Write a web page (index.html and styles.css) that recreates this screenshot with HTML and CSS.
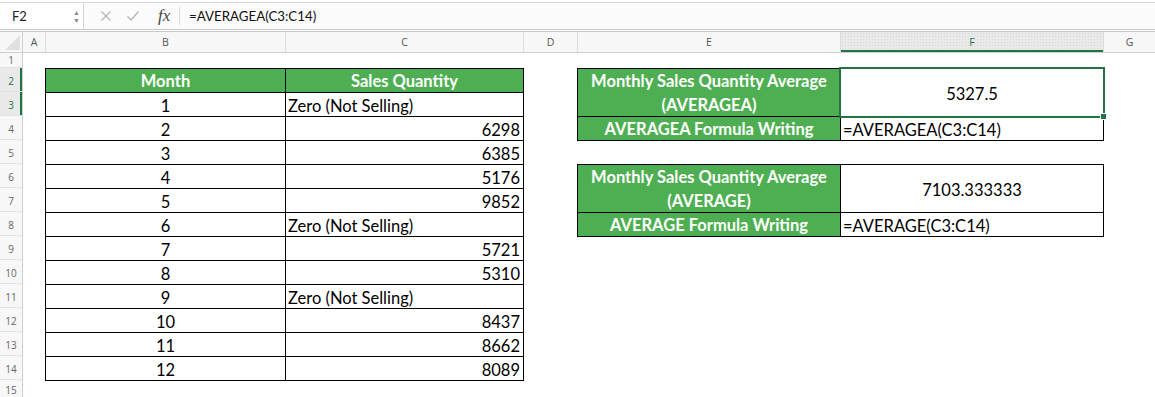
FILE: index.html
```html
<!DOCTYPE html>
<html lang="en">
<head>
    <meta charset="UTF-8">
    <title>AVERAGEA Example</title>
    <link rel="stylesheet" href="styles.css">
</head>
<body>
    <div class="toolbar">
        <div class="name-box">
            <span class="name">F2</span>
            <span class="stepper"><span>&#9650;</span><span>&#9660;</span></span>
        </div>
        <div class="bar-icons">
            <svg class="icon icon-x" width="12" height="12" viewBox="0 0 12 12">
                <path d="M1.5 1.5 L10.5 10.5 M10.5 1.5 L1.5 10.5" stroke="#b4b4b4" stroke-width="1.3" fill="none"/>
            </svg>
            <svg class="icon icon-check" width="14" height="12" viewBox="0 0 14 12">
                <path d="M1.5 6.5 L5 10 L12.5 1.5" stroke="#b4b4b4" stroke-width="1.3" fill="none"/>
            </svg>
            <span class="fx">fx</span>
        </div>
        <div class="formula">=AVERAGEA(C3:C14)</div>
    </div>

    <div class="col-headers">
        <div class="corner"><span class="corner-tri"></span></div>
        <div class="ch col-a">A</div>
        <div class="ch col-b">B</div>
        <div class="ch col-c">C</div>
        <div class="ch col-d">D</div>
        <div class="ch col-e">E</div>
        <div class="ch col-f active">F</div>
        <div class="ch col-g">G</div>
    </div>

    <div class="sheet">
        <div class="row-headers">
            <div class="rh short">1</div>
            <div class="rh active">2</div>
            <div class="rh active">3</div>
            <div class="rh">4</div>
            <div class="rh">5</div>
            <div class="rh">6</div>
            <div class="rh">7</div>
            <div class="rh">8</div>
            <div class="rh">9</div>
            <div class="rh">10</div>
            <div class="rh">11</div>
            <div class="rh">12</div>
            <div class="rh">13</div>
            <div class="rh">14</div>
            <div class="rh last">15</div>
        </div>

        <div class="cells">
            <div class="grid data">
                <div class="cell head">Month</div>
                <div class="cell head">Sales Quantity</div>
                <div class="cell center">1</div><div class="cell left">Zero (Not Selling)</div>
                <div class="cell center">2</div><div class="cell right">6298</div>
                <div class="cell center">3</div><div class="cell right">6385</div>
                <div class="cell center">4</div><div class="cell right">5176</div>
                <div class="cell center">5</div><div class="cell right">9852</div>
                <div class="cell center">6</div><div class="cell left">Zero (Not Selling)</div>
                <div class="cell center">7</div><div class="cell right">5721</div>
                <div class="cell center">8</div><div class="cell right">5310</div>
                <div class="cell center">9</div><div class="cell left">Zero (Not Selling)</div>
                <div class="cell center">10</div><div class="cell right">8437</div>
                <div class="cell center">11</div><div class="cell right">8662</div>
                <div class="cell center">12</div><div class="cell right">8089</div>
            </div>

            <div class="side">
                <div class="grid summary">
                    <div class="cell head tall">Monthly Sales Quantity Average<br>(AVERAGEA)</div>
                    <div class="cell center tall selected">5327.5<span class="handle"></span></div>
                    <div class="cell head">AVERAGEA Formula Writing</div>
                    <div class="cell left">=AVERAGEA(C3:C14)</div>
                </div>
                <div class="grid summary">
                    <div class="cell head tall">Monthly Sales Quantity Average<br>(AVERAGE)</div>
                    <div class="cell center tall">7103.333333</div>
                    <div class="cell head">AVERAGE Formula Writing</div>
                    <div class="cell left">=AVERAGE(C3:C14)</div>
                </div>
            </div>
        </div>
    </div>
</body>
</html>
```

FILE: styles.css
```css
body {
    margin: 0;
    background-color: #fff;
    font-family: Lato, "Open Sans", sans-serif;
    color: #000;
    overflow: hidden;
}

/* formula bar */
.toolbar {
    margin-top: 2px;
    height: 26px;
    border-top: 1px solid #d9d9d9;
    border-bottom: 3px double #c9c9c9;
    background-color: #fbfbfb;
    display: flex;
    align-items: center;
}

.name-box {
    width: 84px;
    height: 100%;
    box-sizing: border-box;
    border-right: 1px solid #d4d4d4;
    background-color: #fff;
    display: flex;
    align-items: center;
    justify-content: space-between;
    padding: 0 3px 0 12px;
}

.name {
    font-size: 13px;
    color: #222;
}

.stepper {
    display: flex;
    flex-direction: column;
    font-size: 7px;
    line-height: 8px;
    color: #8a8a8a;
}

.bar-icons {
    display: flex;
    align-items: center;
    height: 18px;
    width: 96px;
    padding-left: 16px;
    box-sizing: border-box;
    border-right: 1px solid #dcdcdc;
}

.icon-x {
    margin-right: 14px;
}

.icon-check {
    margin-right: 18px;
}

.fx {
    font-family: "Liberation Serif", serif;
    font-style: italic;
    font-size: 17px;
    color: #444;
}

.formula {
    padding-left: 9px;
    font-size: 13.3px;
    color: #111;
}

/* column headers */
.col-headers {
    display: flex;
    height: 21px;
    box-sizing: border-box;
    border-bottom: 1px solid #cfcfcf;
    background-color: #f7f7f7;
}

.corner, .ch {
    box-sizing: border-box;
    border-right: 1px solid #dcdcdc;
    font-family: "Open Sans", sans-serif;
    font-size: 10.5px;
    color: #555;
    display: flex;
    align-items: center;
    justify-content: center;
}

.corner {
    width: 23px;
    position: relative;
    border-right-color: #cfcfcf;
}

.corner-tri {
    position: absolute;
    right: 2px;
    bottom: 2px;
    width: 0;
    height: 0;
    border-left: 15px solid transparent;
    border-bottom: 15px solid #e0e0e0;
}

.col-a { width: 23px; }
.col-b { width: 240px; }
.col-c { width: 238px; }
.col-d { width: 54px; }
.col-e { width: 263px; }
.col-f { width: 263px; }
.col-g { flex-grow: 1; border-right: none; }

.ch.active {
    color: #217346;
    background-color: #e9e9e9;
    background-image: radial-gradient(#d6d6d6 0.6px, transparent 0.6px);
    background-size: 3px 3px;
    box-shadow: inset 0 -2px 0 #217346;
}

/* sheet body */
.sheet {
    display: flex;
}

.row-headers {
    width: 23px;
    box-sizing: border-box;
    border-right: 1px solid #cfcfcf;
    background-color: #f7f7f7;
    display: flex;
    flex-direction: column;
}

.rh {
    height: 24px;
    box-sizing: border-box;
    border-bottom: 1px solid #e2e2e2;
    font-family: "Open Sans", sans-serif;
    font-size: 10px;
    color: #666;
    display: flex;
    align-items: center;
    justify-content: center;
    padding-top: 2px;
}

.rh.short { height: 15px; padding-top: 0; }
.rh.last { height: 17px; border-bottom: none; }

.rh.active {
    color: #217346;
    background-color: #e9e9e9;
    box-shadow: inset -2px 0 0 #217346;
}

.cells {
    display: flex;
    align-items: flex-start;
    padding: 15px 0 0 22px;
}

.grid {
    display: grid;
    gap: 1px;
    padding: 1px;
    background-color: #000;
}

.data {
    grid-template-columns: 239px 237px;
    grid-auto-rows: 23px;
}

.side {
    margin-left: 53px;
    display: flex;
    flex-direction: column;
    gap: 23px;
}

.summary {
    grid-template-columns: 262px 262px;
    grid-template-rows: 47px 23px;
}

.cell {
    background-color: #fff;
    font-size: 16.5px;
    display: flex;
    align-items: center;
    padding: 2px 3px 0;
    overflow: hidden;
    white-space: nowrap;
}

.cell.head {
    background-color: #4eaf52;
    color: #fff;
    font-weight: bold;
    justify-content: center;
    text-align: center;
    line-height: 24px;
    padding-top: 0;
}

.center { justify-content: center; }
.left { justify-content: flex-start; padding-left: 2px; }
.right { justify-content: flex-end; }

.selected {
    position: relative;
    overflow: visible;
    outline: 2px solid #217346;
    z-index: 1;
}

.handle {
    position: absolute;
    right: -4px;
    bottom: -4px;
    width: 5px;
    height: 5px;
    background-color: #217346;
    border: 1px solid #fff;
}
```
